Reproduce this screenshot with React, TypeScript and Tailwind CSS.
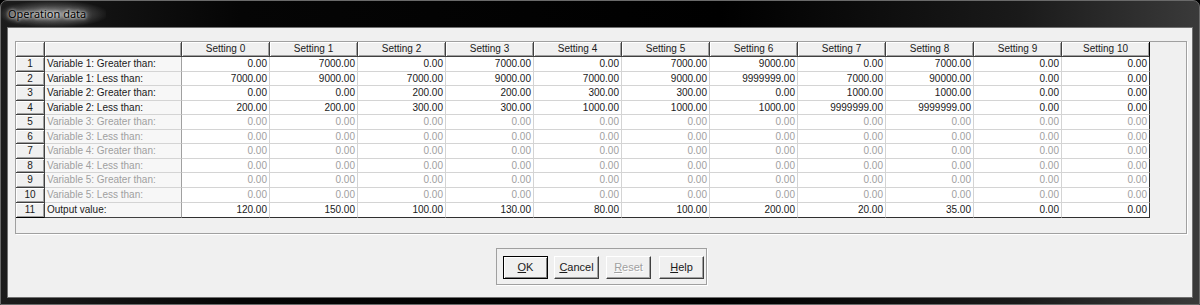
import React from 'react';

const SETTINGS = ['Setting 0', 'Setting 1', 'Setting 2', 'Setting 3', 'Setting 4', 'Setting 5', 'Setting 6', 'Setting 7', 'Setting 8', 'Setting 9', 'Setting 10'];

const ZEROS = Array(11).fill('0.00');

const ROWS: { label: string; values: string[]; disabled?: boolean }[] = [
  { label: 'Variable 1: Greater than:', values: ['0.00', '7000.00', '0.00', '7000.00', '0.00', '7000.00', '9000.00', '0.00', '7000.00', '0.00', '0.00'] },
  { label: 'Variable 1: Less than:', values: ['7000.00', '9000.00', '7000.00', '9000.00', '7000.00', '9000.00', '9999999.00', '7000.00', '90000.00', '0.00', '0.00'] },
  { label: 'Variable 2: Greater than:', values: ['0.00', '0.00', '200.00', '200.00', '300.00', '300.00', '0.00', '1000.00', '1000.00', '0.00', '0.00'] },
  { label: 'Variable 2: Less than:', values: ['200.00', '200.00', '300.00', '300.00', '1000.00', '1000.00', '1000.00', '9999999.00', '9999999.00', '0.00', '0.00'] },
  { label: 'Variable 3: Greater than:', values: ZEROS, disabled: true },
  { label: 'Variable 3: Less than:', values: ZEROS, disabled: true },
  { label: 'Variable 4: Greater than:', values: ZEROS, disabled: true },
  { label: 'Variable 4: Less than:', values: ZEROS, disabled: true },
  { label: 'Variable 5: Greater than:', values: ZEROS, disabled: true },
  { label: 'Variable 5: Less than:', values: ZEROS, disabled: true },
  { label: 'Output value:', values: ['120.00', '150.00', '100.00', '130.00', '80.00', '100.00', '200.00', '20.00', '35.00', '0.00', '0.00'] },
];

// raised 3D look used by header + row number cells
const raised = 'bg-[#f0f0f0] border-r border-b border-r-[#404040] border-b-[#404040] shadow-[inset_1px_1px_0_#ffffff,inset_-1px_-1px_0_#a0a0a0]';

function WinButton({ label, mnemonic, disabled, isDefault, className = '' }: { label: string; mnemonic: number; disabled?: boolean; isDefault?: boolean; className?: string }) {
  const before = label.slice(0, mnemonic);
  const key = label.charAt(mnemonic);
  const after = label.slice(mnemonic + 1);
  return (
    <div
      className={`w-[45px] h-[23px] flex items-center justify-center bg-[#f0f0f0] ${
        isDefault
          ? 'border border-black shadow-[inset_1px_1px_0_#ffffff,inset_-1px_-1px_0_#808080]'
          : 'border border-t-white border-l-white border-r-[#404040] border-b-[#404040] shadow-[inset_-1px_-1px_0_#a0a0a0]'
      } ${className}`}
    >
      <span className={disabled ? 'text-[#a0a0a0] [text-shadow:1px_1px_0_#ffffff]' : 'text-[#1a1a1a]'}>
        {before}
        <span className="underline underline-offset-[1px]">{key}</span>
        {after}
      </span>
    </div>
  );
}

export default function App() {
  return (
    <div className="w-[1200px] h-[305px] bg-black overflow-hidden" style={{ fontFamily: '"Liberation Sans", Arial, sans-serif' }}>
      <div className="w-full h-full flex flex-col rounded-t-[7px] border border-[#6a6a6a] bg-[linear-gradient(90deg,#1c1c1c_0%,#050505_20%,#000000_60%,#1a1a1a_85%,#3a3a3a_100%)]">
        {/* title bar */}
        <div className="h-[26px] flex items-center pl-[7px] relative">
          <div className="absolute left-0 top-0 w-[105px] h-[26px] bg-[radial-gradient(ellipse_at_center,rgba(255,255,255,0.5)_0%,rgba(255,255,255,0.18)_45%,rgba(255,255,255,0)_75%)]" />
          <span className="relative text-[11px] text-black [text-shadow:0_0_6px_#ffffff,0_0_3px_#ffffff]" style={{ fontFamily: '"Noto Sans", sans-serif' }}>
            Operation data
          </span>
        </div>

        {/* client area */}
        <div className="flex-1 mx-[6px] mb-[6px] border border-[#707070] bg-[#f0f0f0] flex flex-col text-[10px] leading-none text-[#1a1a1a]">
          <div className="ml-[7px] mt-[13px] w-[1172px] h-[193px] border border-[#a0a0a0] shadow-[1px_1px_0_#ffffff] bg-[#f0f0f0]">
            <div className="grid grid-cols-[29px_137px_repeat(11,88px)] grid-rows-[15px_15px_14px_15px_14px_15px_14px_15px_14px_15px_15px_15px] w-[1134px]">
              <div className={raised} />
              <div className={raised} />
              {SETTINGS.map((s, i) => (
                <div key={s} className={`${raised} flex items-center justify-center ${i === 10 ? 'border-r-black' : ''}`}>
                  {s}
                </div>
              ))}
              {ROWS.map((row, r) => {
                const last = r === ROWS.length - 1;
                return (
                  <React.Fragment key={row.label}>
                    <div className={`${raised} flex items-center justify-center ${last ? 'border-b-black' : ''}`}>{r + 1}</div>
                    <div
                      className={`bg-[#f7f7f7] border-r border-r-[#a0a0a0] border-b flex items-center pl-[2px] whitespace-nowrap ${
                        last ? 'border-b-[#404040]' : 'border-b-[#d4d4d4]'
                      } ${row.disabled ? 'text-[#a0a0a0]' : ''}`}
                    >
                      {row.label}
                    </div>
                    {row.values.map((v, c) => (
                      <div
                        key={c}
                        className={`bg-white border-r border-b flex items-center justify-end pr-[2px] ${
                          c === 10 ? 'border-r-[#303030]' : 'border-r-[#d4d4d4]'
                        } ${last ? 'border-b-[#303030]' : 'border-b-[#d4d4d4]'} ${row.disabled ? 'text-[#a0a0a0]' : ''}`}
                      >
                        {v}
                      </div>
                    ))}
                  </React.Fragment>
                );
              })}
            </div>
          </div>

          {/* buttons */}
          <div className="mt-[14px] ml-[488px] w-[211px] h-[37px] border border-[#a0a0a0] shadow-[1px_1px_0_#ffffff] flex items-start pt-[7px] pl-[6px] text-[11px]">
            <WinButton label="OK" mnemonic={0} isDefault />
            <WinButton label="Cancel" mnemonic={0} className="ml-[6px]" />
            <WinButton label="Reset" mnemonic={0} disabled className="ml-[7px]" />
            <WinButton label="Help" mnemonic={0} className="ml-[8px]" />
          </div>
        </div>
      </div>
    </div>
  );
}
